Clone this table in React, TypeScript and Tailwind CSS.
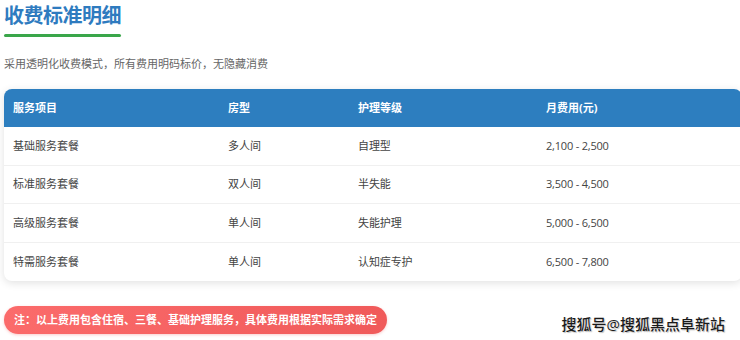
import React from "react";

const rows = [
  ["基础服务套餐", "多人间", "自理型", "2,100 - 2,500"],
  ["标准服务套餐", "双人间", "半失能", "3,500 - 4,500"],
  ["高级服务套餐", "单人间", "失能护理", "5,000 - 6,500"],
  ["特需服务套餐", "单人间", "认知症专护", "6,500 - 7,800"],
];

export default function App() {
  return (
    <div
      className="relative w-[740px] h-[340px] overflow-hidden bg-white"
      style={{ fontFamily: '"Open Sans", "Noto Sans CJK SC", sans-serif' }}
    >
      <div className="pl-[4px]">
        <div className="pt-[1px] text-[20px] leading-[30px] font-bold text-[#2e7bbf] tracking-[-0.5px]">
          收费标准明细
        </div>
        <div className="mt-[3px] w-[117px] h-[3px] bg-[#3aa64a] rounded-full" />
        <div className="mt-[19px] text-[11px] leading-[16px] text-[#666]">
          采用透明化收费模式，所有费用明码标价，无隐藏消费
        </div>
        <div className="mt-[17px] w-[738px] rounded-[8px] overflow-hidden bg-white shadow-[0_2px_8px_rgba(0,0,0,0.12)]">
          <div className="grid grid-cols-[215px_130px_188px_1fr] pl-[9px] h-[38px] items-center bg-[#2d7ebf] text-white text-[11px] font-bold">
            <div>服务项目</div>
            <div>房型</div>
            <div>护理等级</div>
            <div>月费用(元)</div>
          </div>
          {rows.map((r, i) => (
            <div
              key={i}
              className={`grid grid-cols-[215px_130px_188px_1fr] pl-[9px] h-[38.5px] items-center text-[11px] text-[#444] ${
                i < rows.length - 1 ? "border-b border-[#f0f0f0]" : ""
              }`}
            >
              <div>{r[0]}</div>
              <div>{r[1]}</div>
              <div className="tracking-[-0.1px]">{r[2]}</div>
              <div className="tracking-[-0.2px]">{r[3]}</div>
            </div>
          ))}
        </div>
        <div className="mt-[24px] flex items-center justify-between pr-[15px]">
          <div className="h-[28px] px-[10px] flex items-center rounded-full bg-gradient-to-r from-[#fb6b6b] to-[#f05a5a] text-white text-[11px] font-bold shadow-[0_1px_3px_rgba(240,90,90,0.3)]">
            注：以上费用包含住宿、三餐、基础护理服务，具体费用根据实际需求确定
          </div>
          <div
            className="text-[15px] font-medium text-[#1a1a1a] mt-[8px]"
            style={{ textShadow: "0 0 1px #fff, 1px 1px 1px #bbb" }}
          >
            搜狐号@搜狐黑点阜新站
          </div>
        </div>
      </div>
    </div>
  );
}
